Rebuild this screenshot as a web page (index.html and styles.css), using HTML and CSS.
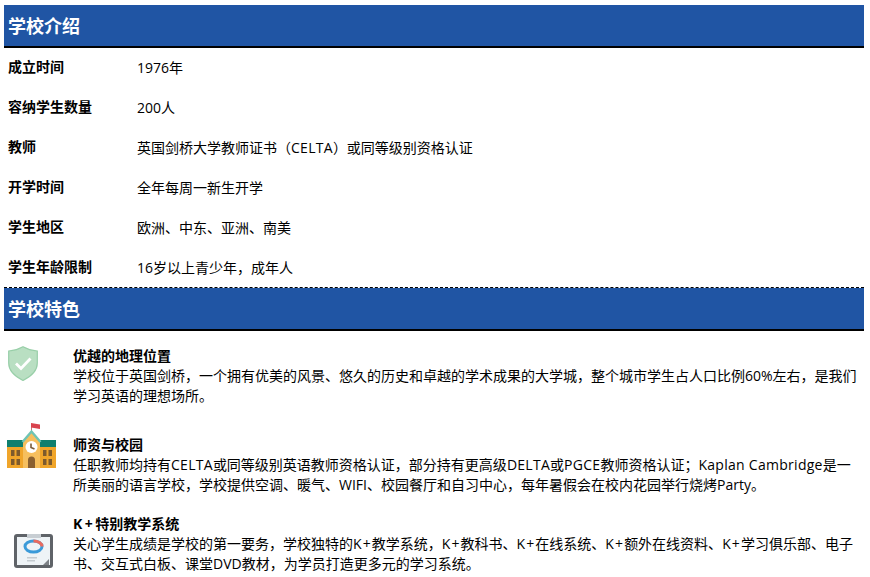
FILE: index.html
```html
<!DOCTYPE html>
<html lang="zh-CN">
<head>
<meta charset="utf-8">
<title>学校介绍</title>
<link rel="stylesheet" href="styles.css">
</head>
<body>
<section class="intro">
  <h2 class="bar">学校介绍</h2>
  <dl class="facts">
    <div class="fact"><dt>成立时间</dt><dd>1976年</dd></div>
    <div class="fact"><dt>容纳学生数量</dt><dd>200人</dd></div>
    <div class="fact"><dt>教师</dt><dd>英国剑桥大学教师证书（<span class="en">CELTA</span>）或同等级别资格认证</dd></div>
    <div class="fact"><dt>开学时间</dt><dd>全年每周一新生开学</dd></div>
    <div class="fact"><dt>学生地区</dt><dd>欧洲、中东、亚洲、南美</dd></div>
    <div class="fact"><dt>学生年龄限制</dt><dd>16岁以上青少年，成年人</dd></div>
  </dl>
</section>
<section class="features">
  <h2 class="bar">学校特色</h2>
  <div class="feature first">
    <svg class="icon shield" viewBox="0 0 30 35">
      <path d="M15 .7 C19 3 24 4.500 29.300 5 V17 C29.300 25 22 31 15 34.500 C8 31 .7 25 .7 17 V5 C6 4.500 11 3 15 .7Z" fill="#b9dfc2" stroke="#98cfa8" stroke-width="1.200"/>
      <path d="M8 17.500 L13 22.500 L22.500 12.500" fill="none" stroke="#fff" stroke-width="2.800"/>
    </svg>
    <div class="copy">
      <h3>优越的地理位置</h3>
      <p>学校位于英国剑桥，一个拥有优美的风景、悠久的历史和卓越的学术成果的大学城，整个城市学生占人口比例60%左右，是我们学习英语的理想场所。</p>
    </div>
  </div>
  <div class="feature second">
    <svg class="icon school" viewBox="0 0 49 45">
      <path d="M24.500 8 V1" stroke="#b55" stroke-width=".8"/>
      <path d="M24 0 L33 1.500 L33 6 L24 4.500Z" fill="#d9434e"/>
      <rect x="0" y="17" width="49" height="28" fill="#f0a52a"/>
      <rect x="0" y="17" width="49" height="7" fill="#107f6e"/>
      <path d="M24.500 8 L33 18 V45 H16 V18Z" fill="#f6bf5e"/>
      <path d="M15.500 19 L24.500 8.500 L33.500 19" fill="none" stroke="#6fc4b4" stroke-width="2.400"/>
      <circle cx="24.500" cy="24" r="6" fill="#fff"/>
      <path d="M24 20.500 V24.500 L27.500 26" fill="none" stroke="#7a5a3a" stroke-width="1.600"/>
      <path d="M21 45 V37 A3.500 3.500 0 0 1 28 37 V45Z" fill="#8a6030"/>
      <path d="M4 27 h3.500 v6 h-3.500z M9.500 27 h3.500 v6 h-3.500z M4 36 h3.500 v6 h-3.500z M9.500 36 h3.500 v6 h-3.500z M36 27 h3.500 v6 h-3.500z M41.500 27 h3.500 v6 h-3.500z M36 36 h3.500 v6 h-3.500z M41.500 36 h3.500 v6 h-3.500z" fill="#7d5a2c"/>
    </svg>
    <div class="copy">
      <h3>师资与校园</h3>
      <p>任职教师均持有<span class="en">CELTA</span>或同等级别英语教师资格认证，部分持有更高级<span class="en">DELTA</span>或<span class="en">PGCE</span>教师资格认证；<span class="en">Kaplan Cambridge</span>是一<br>所美丽的语言学校，学校提供空调、暖气、WIFI、校园餐厅和自习中心，每年暑假会在校内花园举行烧烤Party。</p>
    </div>
  </div>
  <div class="feature third">
    <svg class="icon board" viewBox="0 0 39 35">
      <rect x="0" y="1" width="39" height="34" rx="3" fill="#5f6368"/>
      <rect x="3" y="4" width="33" height="28" fill="#eef3f6"/>
      <rect x="13" y="1" width="14" height="4" fill="#c8ced3"/>
      <ellipse cx="19.500" cy="13.500" rx="8.500" ry="5.500" fill="none" stroke="#3a9ad9" stroke-width="3"/>
      <path d="M19.500 8 A8.500 5.500 0 0 1 28 13.500" fill="none" stroke="#ea6a5e" stroke-width="3"/>
      <rect x="13" y="24" width="10" height="1.500" fill="#c4cbd0"/>
      <rect x="13" y="27" width="8" height="1.500" fill="#c4cbd0"/>
      <path d="M35 26 V32 H29Z" fill="#7d8186"/>
    </svg>
    <div class="copy">
      <h3><span class="kb">K+</span>特别教学系统</h3>
      <p>关心学生成绩是学校的第一要务，学校独特的<span class="k">K+</span>教学系统，<span class="k">K+</span>教科书、<span class="k">K+</span>在线系统、<span class="k">K+</span>额外在线资料、<span class="k">K+</span>学习俱乐部、电子<br>书、交互式白板、课堂DVD教材，为学员打造更多元的学习系统。</p>
    </div>
  </div>
</section>
</body>
</html>
```
FILE: styles.css
```css
html, body { margin: 0; padding: 0; }
body {
  width: 860px;
  height: 572px;
  overflow: hidden;
  padding: 5px 6px 0 4px;
  font-family: "Open Sans", "Noto Sans CJK SC", sans-serif;
  font-size: 14px;
  line-height: 20px;
  color: #000;
  background: #fff;
}
.bar {
  margin: 0;
  height: 41px;
  padding-left: 4px;
  font-size: 18px;
  font-weight: bold;
  line-height: 43px;
  color: #fff;
  background: #2055a4;
  border-bottom: 2px solid #000;
}
.facts { margin: 0; }
.fact {
  display: flex;
  height: 40px;
  padding: 9px 0 0 4px;
  box-sizing: border-box;
}
.fact dt { width: 129px; font-weight: bold; }
.fact dd { margin: 0; padding-top: 1px; }
.features { border-top: 1px dashed #000; margin-top: -1px; }
.feature { display: flex; align-items: flex-start; }
.feature.first { padding-top: 15px; height: 75px; }
.feature.second { padding-top: 14px; height: 74px; }
.feature.third { padding-top: 5px; }
.icon { flex: none; display: block; }
.shield { width: 30px; height: 35px; margin: 0 35px 0 4px; }
.school { width: 49px; height: 45px; margin: -12px 17px 0 3px; }
.board { width: 39px; height: 35px; margin: 19px 20px 0 10px; }
.copy { flex: 1; padding-right: 6px; }
.copy h3 { margin: 0; font-size: 14px; line-height: 20px; font-weight: bold; }
.copy p { margin: 0; }
.en { letter-spacing: .28px; }
.k { letter-spacing: 1.1px; }
.kb { letter-spacing: 2.5px; }
```
